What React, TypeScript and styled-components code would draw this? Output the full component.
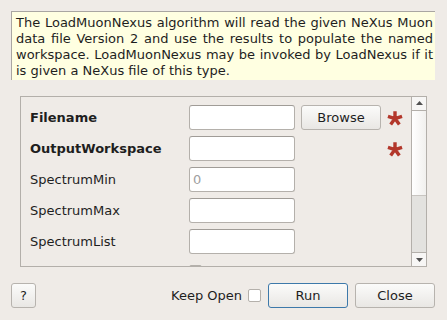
import React from 'react';
import styled, { createGlobalStyle } from 'styled-components';

const GlobalStyle = createGlobalStyle`
  html, body {
    margin: 0;
    padding: 0;
    background: #efebe7;
  }
  body {
    font-family: "DejaVu Sans", "Liberation Sans", sans-serif;
    font-size: 13px;
    color: #1e1e1e;
  }
`;

const Dialog = styled.div`
  width: 447px;
  height: 320px;
  box-sizing: border-box;
  padding: 11px 12px 12px 11px;
  display: flex;
  flex-direction: column;
  background: #efebe7;
`;

const Description = styled.div`
  box-sizing: border-box;
  width: 424px;
  height: 69px;
  padding: 3px 2px 0 4px;
  background: #ffffe1;
  border-top: 1px solid #a9a6a2;
  border-left: 1px solid #a9a6a2;
  line-height: 16px;
  text-align: justify;
`;

const ScrollArea = styled.div`
  margin: 16px 0 0 9px;
  width: 407px;
  height: 172px;
  box-sizing: border-box;
  border: 1px solid #b3afaa;
  display: flex;
  overflow: hidden;
`;

const PropGrid = styled.div`
  flex: 1;
  padding: 9px 0 0 9px;
  display: grid;
  grid-template-columns: 153px 106px 80px 16px;
  column-gap: 6px;
  grid-auto-rows: 24px;
  row-gap: 7px;
  align-items: center;
  align-content: start;
`;

const Label = styled.div<{ $bold?: boolean }>`
  font-weight: ${(p) => (p.$bold ? 'bold' : 'normal')};
  white-space: nowrap;
`;

const Input = styled.div`
  box-sizing: border-box;
  height: 25px;
  border: 1px solid #b4b0ab;
  border-top-color: #a09c97;
  border-radius: 3px;
  background: #ffffff;
  padding: 0 3px;
  line-height: 23px;
  color: #a0a0a0;
`;

const Button = styled.button<{ $default?: boolean; $width?: number }>`
  box-sizing: border-box;
  width: ${(p) => p.$width ?? 80}px;
  height: 25px;
  margin: 0;
  padding: 0;
  font-family: inherit;
  font-size: 13px;
  color: #1e1e1e;
  border: 1px solid ${(p) => (p.$default ? '#3d79aa' : '#b7b3ae')};
  border-radius: 3px;
  background: linear-gradient(#fbfbfa, #e9e7e4);
`;

const Required = styled.div`
  display: flex;
  align-items: center;
  justify-content: center;
  height: 24px;
`;

const CheckBox = styled.div<{ $top?: boolean }>`
  width: 13px;
  height: 13px;
  box-sizing: border-box;
  border: 1px solid #b4b0ab;
  border-radius: 2px;
  background: #ffffff;
  ${(p) => (p.$top ? 'align-self: start; margin-top: 4px;' : '')}
`;

const ScrollBar = styled.div`
  width: 14px;
  border-left: 1px solid #b3afaa;
  display: flex;
  flex-direction: column;
  background: #e3e2df;
`;

const ArrowButton = styled.div<{ $down?: boolean }>`
  height: 13px;
  flex: none;
  background: #f7f6f5;
  border-${(p) => (p.$down ? 'top' : 'bottom')}: 1px solid #b3afaa;
  margin-top: ${(p) => (p.$down ? 'auto' : '0')};
  display: flex;
  align-items: center;
  justify-content: center;
`;

const Thumb = styled.div`
  height: 84px;
  background: linear-gradient(90deg, #ffffff, #f1f0ee);
  border-bottom: 1px solid #c8c5c1;
`;

const Footer = styled.div`
  margin-top: 16px;
  display: flex;
  align-items: center;
  gap: 7px;
`;

const Spacer = styled.div`
  flex: 1;
`;

const KeepOpen = styled.label`
  display: flex;
  align-items: center;
  gap: 6px;
`;

const Arrow = ({ down }: { down?: boolean }) => (
  <svg width="7" height="4" viewBox="0 0 7 4">
    <polygon points={down ? '0,0 7,0 3.5,4' : '0,4 7,4 3.5,0'} fill="#505050" />
  </svg>
);

// five-armed red asterisk that marks mandatory properties
const Asterisk = () => {
  const cx = 8;
  const cy = 8.6;
  const r = 7.4;
  const arms = [-90, -18, 54, 126, 198].map((deg) => {
    const a = (deg * Math.PI) / 180;
    return `M${cx} ${cy}L${(cx + r * Math.cos(a)).toFixed(2)} ${(cy + r * Math.sin(a)).toFixed(2)}`;
  });
  return (
    <svg width="16" height="16" viewBox="0 0 16 16">
      <path d={arms.join('')} stroke="#b3372b" strokeWidth="3.4" strokeLinecap="butt" fill="none" />
    </svg>
  );
};

const properties = [
  { name: 'Filename', bold: true, browse: true, required: true },
  { name: 'OutputWorkspace', bold: true, required: true },
  { name: 'SpectrumMin', placeholder: '0' },
  { name: 'SpectrumMax' },
  { name: 'SpectrumList' },
];

export default function App() {
  return (
    <>
      <GlobalStyle />
      <Dialog>
        <Description>
          The LoadMuonNexus algorithm will read the given NeXus Muon data file Version 2 and use
          the results to populate the named workspace. LoadMuonNexus may be invoked by LoadNexus
          if it is given a NeXus file of this type.
        </Description>
        <ScrollArea>
          <PropGrid>
            {properties.map((p) => (
              <React.Fragment key={p.name}>
                <Label $bold={p.bold}>{p.name}</Label>
                <Input>{p.placeholder}</Input>
                {p.browse ? <Button>Browse</Button> : <div />}
                {p.required ? (
                  <Required>
                    <Asterisk />
                  </Required>
                ) : (
                  <div />
                )}
              </React.Fragment>
            ))}
            <Label />
            <CheckBox $top />
          </PropGrid>
          <ScrollBar>
            <ArrowButton>
              <Arrow />
            </ArrowButton>
            <Thumb />
            <ArrowButton $down>
              <Arrow down />
            </ArrowButton>
          </ScrollBar>
        </ScrollArea>
        <Footer>
          <Button $width={25}>?</Button>
          <Spacer />
          <KeepOpen>
            Keep Open
            <CheckBox />
          </KeepOpen>
          <Button $default>Run</Button>
          <Button>Close</Button>
        </Footer>
      </Dialog>
    </>
  );
}
